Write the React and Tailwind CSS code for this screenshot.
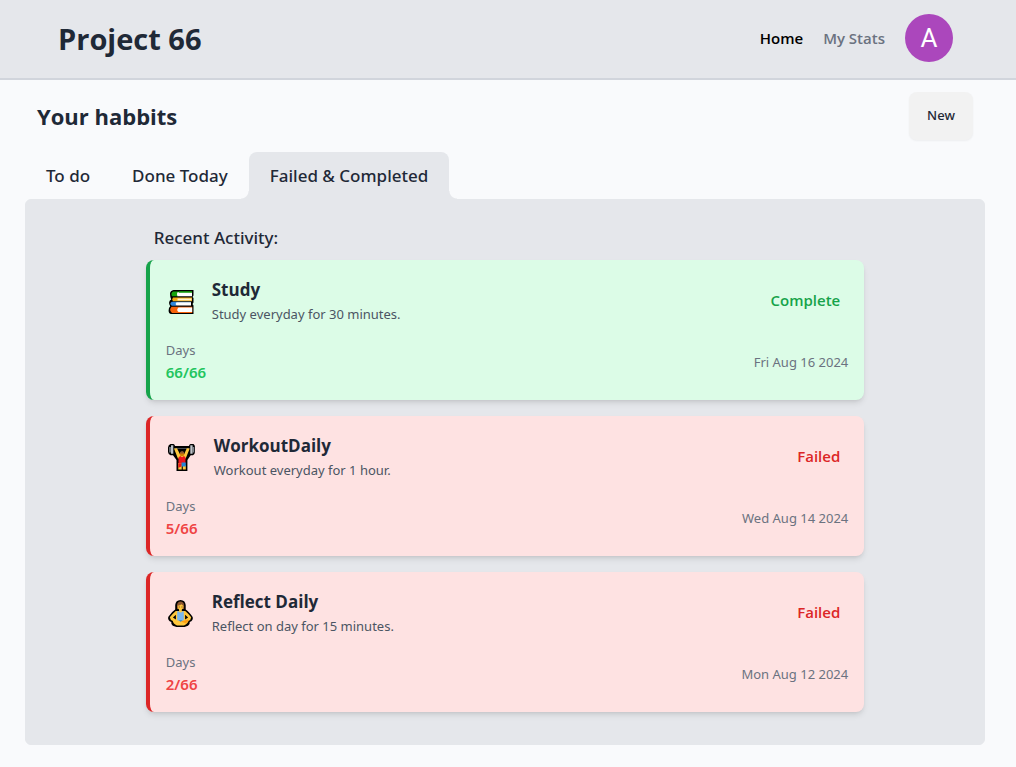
import { useState } from "react";

function BooksIcon() {
  return (
    <svg viewBox="0 0 30 32" className="h-8 w-[30px] shrink-0" aria-hidden="true">
      <path d="M6.200 6h21.300v5.500l-1 1.600 1 1v4.400l-1 1.500 1 1.500v8.500H5.200Q2.600 29.500 2.600 26.400 2.600 23.500 4.200 22.200 2.800 20.500 3.100 18.300 3.500 16.300 5.200 15.600 4 12.800 4 9.800 4.200 6.500 7.600 6Z" fill="#000" />
      <path d="M7 7.400h19v1H12v3.900H6Q4.400 9 7 7.400Z" fill="#16a50f" />
      <path d="M11.500 8.300H26v4H11.500q-1.500-2 0-4Z" fill="#fff" />
      <path d="M13 7.400h13v1.300H13Z" fill="#16a50f" />
      <path d="M7 13.400h19v3.800H7q-1.700-1.900 0-3.800Z" fill="#f5ad12" />
      <path d="M11.500 14.500h14v1.900h-14Z" fill="#fff3cf" />
      <path d="M5.800 17.800H25v1H10.500v3H5.800q-3-1.900 0-4Z" fill="#2f86dc" />
      <path d="M10.500 18.300H25v3.300H10.500q-1.800-1.600 0-3.300Z" fill="#fff" />
      <path d="M5.500 22.800h20.700v6.200H6q-3.500-2.600-.5-6.200Z" fill="#f7630c" />
      <path d="M12.500 23.600h13.700v4.500H12.500q-2.600-2.200 0-4.500Z" fill="#fff" />
    </svg>
  );
}

function WeightsIcon() {
  return (
    <svg viewBox="0 0 32 32" className="size-8 shrink-0" aria-hidden="true">
      <path d="M4.500 4h3q1.400.4 1.500 2h14q.1-1.600 1.500-2h3q1.400.8 1.500 3v5q-.3 2.800-2 3.200h-2.300L21.400 20v11H10.500V20L7 15.200H4.500Q2.300 14.500 2 12V7.500Q2.300 4.700 4.500 4Z" fill="#000" />
      <path d="M3.200 7h1.600v5.500H3.200ZM26.700 7h1.600v5.500h-1.600Z" fill="#7d858d" />
      <path d="M5 5.300h2.300v8.500H5ZM24.300 5.300h2.300v8.500h-2.300Z" fill="#bdc3c9" />
      <path d="M8.500 8h14.700v1H8.500Z" fill="#444b52" />
      <path d="m8 8.500 3-.3 3.300 6.800h3.500l3-6.800 2.900.3-4 10h-7.800Z" fill="#ffc83d" />
      <circle cx="16" cy="14" r="2.300" fill="#d67d00" />
      <path d="M13.600 13.600q.5-2.600 2.500-2.600t2.400 2.600Z" fill="#8e562e" />
      <path d="m12.500 17.500 1.700-1.600 1.800 1.300 2-1.300 1.500 1.600v6h-7Z" fill="#ed151c" />
      <path d="M12.300 23h3.400v6.600h-3.400ZM16.800 25.200h3v4.400h-3Z" fill="#ffc83d" />
      <path d="M12.300 23.200H16l-1 3.600-2.700 1Z" fill="#ed151c" />
      <path d="M15.500 22.500h4.300v4h-4Z" fill="#2385d8" />
    </svg>
  );
}

function LotusIcon() {
  return (
    <svg viewBox="0 0 30 32" className="h-8 w-[30px] shrink-0" aria-hidden="true">
      <path d="M14.500 4q4.700.2 5.200 5v4.400q3.300 2 7 7.700.8 3.700-3 4.900.6 2.200-1.700 3.700L18.500 31h-8l-3.700-1.300q-2-1.500-1.500-3.700-3.800-1.200-3.100-4.900 3.500-5.700 7-7.700V9q.5-4.800 5.300-5Z" fill="#000" />
      <path d="M11 13V9q.5-3.500 3.500-3.600 3.200.1 3.600 3.600v4Z" fill="#8e562e" />
      <path d="M11.600 9.800q2.600-.3 3.800-1.600l2 1.800q0 3-1.600 3.700v2h-2.700v-2q-1.500-1-1.500-3.900Z" fill="#ffc83d" />
      <path d="M12.700 10.500h1v1h-1ZM15.500 10.500h1v1h-1Z" fill="#5c391d" />
      <path d="M9.800 15h9.400q3 2.500 6 6.300-.2 3-3 3.700l-4 1.500-3.700-.5-3.500.5-4-1.500q-2.800-.6-3.200-3.700Q6.800 17.500 9.800 15Z" fill="#ffc83d" />
      <path d="m9.900 18.800-3 2.700 3 1.900ZM19.100 18.800l3 2.700-3 1.900Z" fill="#000" />
      <path d="M11.200 15.300h1.300q2 2.500 4 0h1.300v9.200h-6.600Z" fill="#7ab7ed" />
      <path d="M6.700 24.500h4l3.800 1.200 8-1.200q-.4 3-4.500 5h-7q-4-1.700-4.300-5Z" fill="#ffc83d" />
      <path d="m14.800 25.500 7.200-2 1.200 1-3.600 2.700Z" fill="#ff9f10" />
      <path d="M12.400 24.300h4.300l-2 1.500Z" fill="#2385d8" />
    </svg>
  );
}

const TABS = ["To do", "Done Today", "Failed & Completed"];

const ACTIVITY = [
  { title: "Study", text: "Study everyday for 30 minutes.", days: 66, date: "Fri Aug 16 2024", complete: true, Icon: BooksIcon },
  { title: "WorkoutDaily", text: "Workout everyday for 1 hour.", days: 5, date: "Wed Aug 14 2024", complete: false, Icon: WeightsIcon },
  { title: "Reflect Daily", text: "Reflect on day for 15 minutes.", days: 2, date: "Mon Aug 12 2024", complete: false, Icon: LotusIcon },
];

function ActivityCard({ title, text, days, date, complete, Icon }) {
  return (
    <li className={`rounded-lg border-l-4 p-4 shadow-md ${complete ? "border-[#16a34a] bg-[#dcfce7]" : "border-[#dc2626] bg-[#fee2e2]"}`}>
      <div className="flex items-center justify-between">
        <div className="flex items-center gap-4">
          <Icon />
          <div>
            <h3 className="font-['Open_Sans',sans-serif] text-[17px]/7 font-bold">{title}</h3>
            <p className="text-[13px]/5 text-[#4b5563]">{text}</p>
          </div>
        </div>
        <p className={`px-2 font-['Open_Sans',sans-serif] text-[15px]/6 font-semibold ${complete ? "text-[#16a34a]" : "text-[#dc2626]"}`}>
          {complete ? "Complete" : "Failed"}
        </p>
      </div>
      <div className="mt-4 flex items-center justify-between">
        <div>
          <p className="text-[13px]/5 text-[#6b7280]">Days</p>
          <p className={`text-[15px]/6 font-semibold ${complete ? "text-[#22c55e]" : "text-[#ef4444]"}`}>{days}/66</p>
        </div>
        <p className="text-[13px]/5 text-[#6b7280]">{date}</p>
      </div>
    </li>
  );
}

function Tab({ label, active, onSelect }) {
  return (
    <button
      type="button"
      role="tab"
      aria-selected={active}
      onClick={onSelect}
      className={`relative h-12 rounded-t-lg px-[21px] text-[17px] font-medium ${active ? "bg-[#e5e7eb]" : ""}`}
    >
      {label}
      {active && (
        <>
          <span className="absolute bottom-px -left-2 size-2 bg-[radial-gradient(circle_at_top_left,transparent_7px,#e5e7eb_8px)]" />
          <span className="absolute -right-2 bottom-px size-2 bg-[radial-gradient(circle_at_top_right,transparent_7px,#e5e7eb_8px)]" />
        </>
      )}
    </button>
  );
}

export default function App() {
  const [tab, setTab] = useState(2);
  return (
    <div className="min-h-screen bg-[#f9fafc] font-['Noto_Sans','Open_Sans',sans-serif] text-[#1f2937]">
      <header className="flex h-20 items-center justify-between border-b-2 border-gray-300 bg-[#e5e7eb] pr-[63px] pl-[58px]">
        <h1 className="font-['Open_Sans',sans-serif] text-[29px]/9 font-bold">Project 66</h1>
        <nav className="flex items-center gap-5 pb-0.5 font-['Open_Sans',sans-serif] text-[15px]/6 font-semibold">
          <a href="#home" className="text-black">Home</a>
          <a href="#stats" className="text-[#6b7280]">My Stats</a>
          <button type="button" aria-label="Account" className="size-12 rounded-full bg-[#ab47bc] font-[Roboto,sans-serif] text-[26px] font-normal text-white">A</button>
        </nav>
      </header>

      <main className="pt-3 pr-[31px] pb-5 pl-[25px]">
        <div className="flex items-center justify-between px-3">
          <h2 className="font-['Open_Sans',sans-serif] text-[22px]/8 font-bold">Your habbits</h2>
          <button type="button" className="h-12 w-16 rounded-lg bg-[#f2f2f2] text-[13px] font-medium shadow-xs">New</button>
        </div>

        <div role="tablist" className="mt-3 flex">
          {TABS.map((label, i) => (
            <Tab key={label} label={label} active={i === tab} onSelect={() => setTab(i)} />
          ))}
        </div>

        <section role="tabpanel" className="-mt-px rounded-md border border-[#e5e7eb] bg-[#e5e7eb] pt-6 pb-8">
          <div className="mx-auto w-3/4">
            <h2 className="mb-2 px-2 text-[17px]/7 font-medium">Recent Activity:</h2>
            <ul className="flex flex-col gap-4">
              {ACTIVITY.map((item) => (
                <ActivityCard key={item.title} {...item} />
              ))}
            </ul>
          </div>
        </section>
      </main>
    </div>
  );
}
